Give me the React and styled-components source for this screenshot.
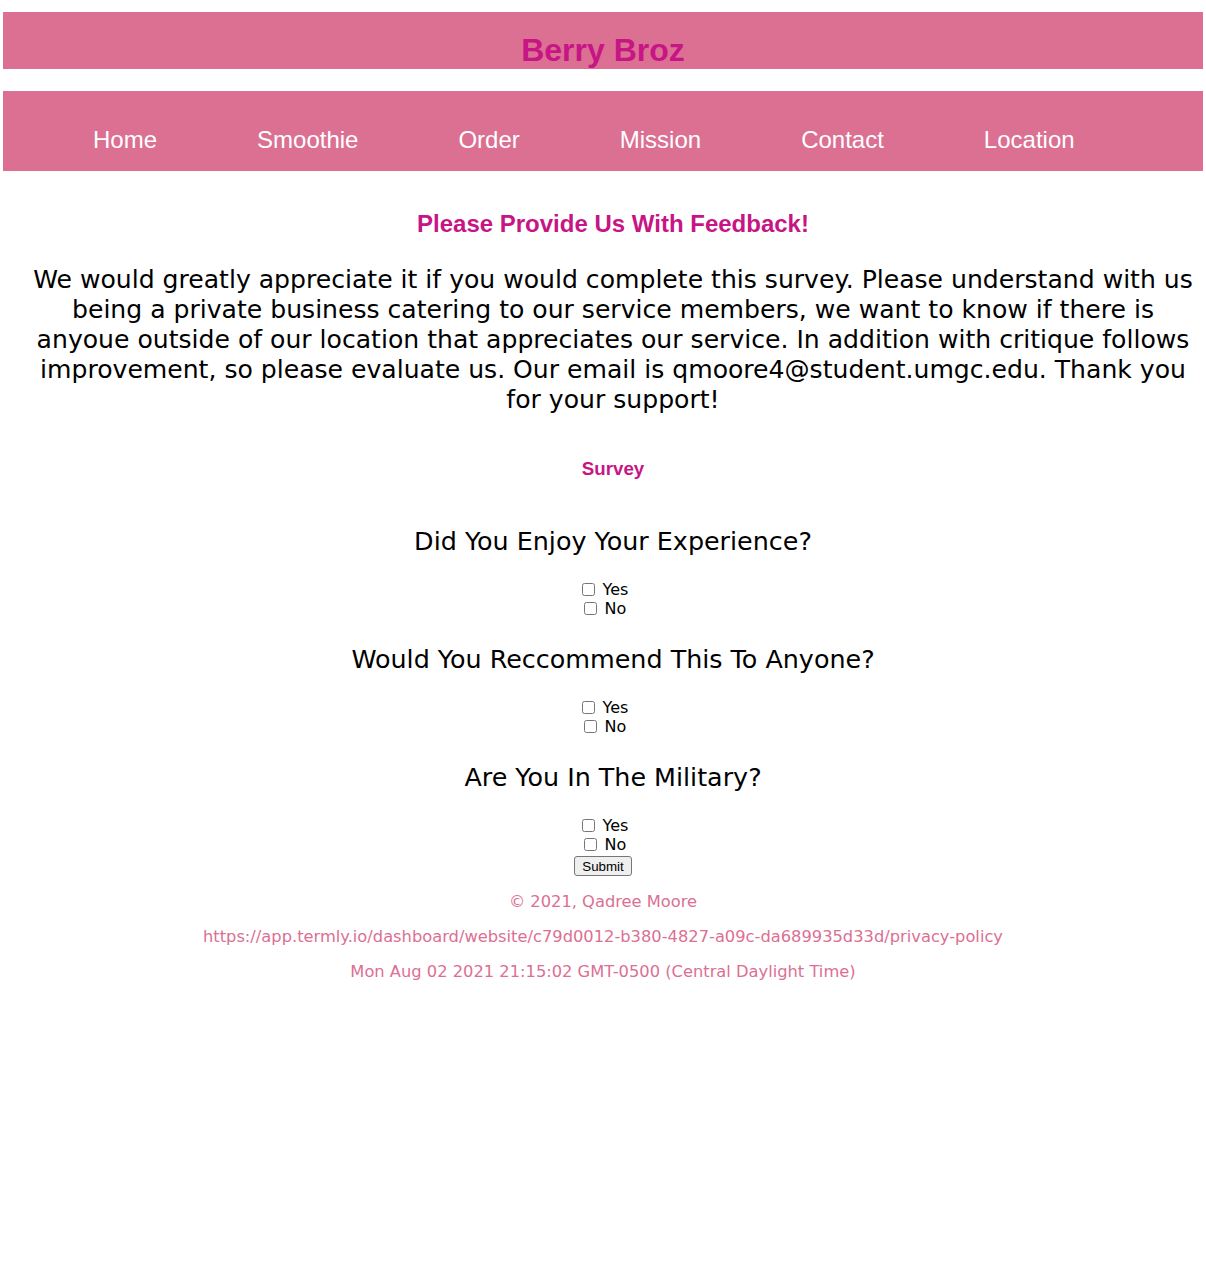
import React from "react";
import styled, { createGlobalStyle } from "styled-components";

const GlobalStyle = createGlobalStyle`
  html, body {
    margin: 0;
    padding: 0;
    background: #ffffff;
  }
  * { box-sizing: border-box; }
`;

const PINK = "#db7093";
const VIOLET = "#c71585";

const Page = styled.div`
  padding: 12px 3px 0;
  font-family: "DejaVu Sans", Verdana, sans-serif;
  color: #000;
`;

const Header = styled.header`
  height: 57px;
  background: ${PINK};
  padding-top: 20px;
  text-align: center;
`;

const Brand = styled.h1`
  margin: 0;
  font-family: "Liberation Sans", Arial, sans-serif;
  font-size: 32px;
  font-weight: bold;
  line-height: normal;
  color: ${VIOLET};
`;

const NavBar = styled.nav`
  margin-top: 22px;
  height: 80px;
  background: ${PINK};
  display: flex;
  align-items: flex-start;
  gap: 100px;
  padding: 35px 0 0 90px;
`;

const NavLink = styled.a`
  font-family: "Liberation Sans", Arial, sans-serif;
  font-size: 24px;
  line-height: normal;
  color: #ffffff;
  text-decoration: none;
`;

const Main = styled.main`
  margin-left: 20px;
  text-align: center;
`;

const SectionTitle = styled.h2`
  margin: 39px 0 0;
  font-family: "Liberation Sans", Arial, sans-serif;
  font-size: 24px;
  line-height: 28px;
  font-weight: bold;
  color: ${VIOLET};
`;

const Intro = styled.p`
  margin: 27px 0 0;
  padding: 0 8px;
  font-size: 25.1px;
  line-height: 30px;
`;

const SurveyTitle = styled.h3`
  margin: 43px 0 0;
  font-family: "Liberation Sans", Arial, sans-serif;
  font-size: 18.72px;
  line-height: 22px;
  font-weight: bold;
  color: ${VIOLET};
`;

const Form = styled.form`
  margin-top: 19.5px;
  display: flex;
  flex-direction: column;
`;

const Question = styled.h4`
  margin: 26.5px 0 23.5px;
  padding-left: 20px;
  font-size: 25.4px;
  line-height: 30px;
  font-weight: normal;
  text-align: center;
`;

const Option = styled.label`
  height: 19px;
  display: flex;
  justify-content: center;
  align-items: center;
  font-size: 16px;
`;

const Box = styled.input`
  width: 13px;
  height: 13px;
  margin: 3px 3px 3px 4px;
`;

const OptionText = styled.span`
  margin-left: 5px;
`;

const SubmitRow = styled.div`
  margin-top: 2px;
  text-align: center;
`;

const SubmitButton = styled.button`
  height: 20px;
  padding: 1px 7px;
  font-family: "Liberation Sans", Arial, sans-serif;
  font-size: 13.33px;
  color: #000;
  background: #efefef;
  border: 1px solid #767676;
  border-radius: 3px;
`;

const Footer = styled.footer`
  text-align: center;
`;

const FooterLine = styled.p`
  margin: 16px 0;
  font-size: 16.3px;
  line-height: 19px;
  color: ${PINK};
`;

const navItems = ["Home", "Smoothie", "Order", "Mission", "Contact", "Location"];

const questions = [
  "Did You Enjoy Your Experience?",
  "Would You Reccommend This To Anyone?",
  "Are You In The Military?",
];

export default function App() {
  return (
    <>
      <GlobalStyle />
      <Page>
        <Header>
          <Brand>Berry Broz</Brand>
        </Header>
        <NavBar>
          {navItems.map((item) => (
            <NavLink key={item} href="#">
              {item}
            </NavLink>
          ))}
        </NavBar>
        <Main>
          <SectionTitle>Please Provide Us With Feedback!</SectionTitle>
          <Intro>
            We would greatly appreciate it if you would complete this survey. Please
            understand with us being a private business catering to our service
            members, we want to know if there is anyoue outside of our location that
            appreciates our service. In addition with critique follows improvement, so
            please evaluate us. Our email is qmoore4@student.umgc.edu. Thank you for
            your support!
          </Intro>
          <SurveyTitle>Survey</SurveyTitle>
        </Main>
        <Form onSubmit={(e) => e.preventDefault()}>
          {questions.map((q) => (
            <React.Fragment key={q}>
              <Question>{q}</Question>
              <Option>
                <Box type="checkbox" />
                <OptionText>Yes</OptionText>
              </Option>
              <Option>
                <Box type="checkbox" />
                <OptionText>No</OptionText>
              </Option>
            </React.Fragment>
          ))}
          <SubmitRow>
            <SubmitButton type="submit">Submit</SubmitButton>
          </SubmitRow>
        </Form>
        <Footer>
          <FooterLine>© 2021, Qadree Moore</FooterLine>
          <FooterLine>
            https://app.termly.io/dashboard/website/c79d0012-b380-4827-a09c-da689935d33d/privacy-policy
          </FooterLine>
          <FooterLine>Mon Aug 02 2021 21:15:02 GMT-0500 (Central Daylight Time)</FooterLine>
        </Footer>
      </Page>
    </>
  );
}
